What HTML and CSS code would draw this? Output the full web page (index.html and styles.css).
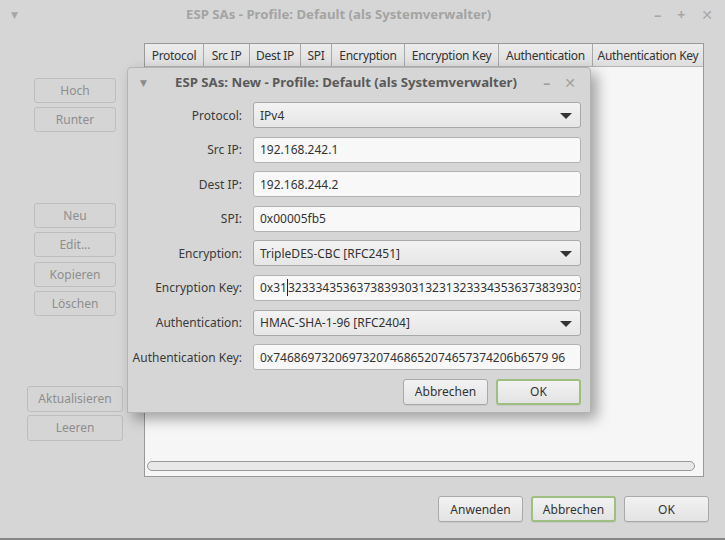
FILE: index.html
```html
<!DOCTYPE html>
<html lang="de">
<head>
    <meta charset="UTF-8">
    <title>ESP SAs</title>
    <link rel="stylesheet" href="styles.css">
</head>
<body>
    <div class="window">
        <div class="titlebar">
            <span class="tb-menu">&#9660;</span>
            <span class="tb-title">ESP SAs - Profile: Default (als Systemverwalter)</span>
            <span class="tb-ctrl"><span>&#8211;</span><span>+</span><span>&#10005;</span></span>
        </div>

        <div class="main">
            <div class="side">
                <div class="group g-move">
                    <button class="btn off">Hoch</button>
                    <button class="btn off">Runter</button>
                </div>
                <div class="group g-edit">
                    <button class="btn off">Neu</button>
                    <button class="btn off">Edit...</button>
                    <button class="btn off">Kopieren</button>
                    <button class="btn off">Löschen</button>
                </div>
                <div class="group g-list">
                    <button class="btn off wide">Aktualisieren</button>
                    <button class="btn off wide">Leeren</button>
                </div>
            </div>

            <div class="table">
                <div class="thead">
                    <div class="th" style="width:59px">Protocol</div>
                    <div class="th" style="width:46px">Src IP</div>
                    <div class="th" style="width:51px">Dest IP</div>
                    <div class="th" style="width:31px">SPI</div>
                    <div class="th" style="width:73px">Encryption</div>
                    <div class="th" style="width:94px">Encryption Key</div>
                    <div class="th" style="width:94px">Authentication</div>
                    <div class="th last">Authentication Key</div>
                </div>
                <div class="tbody"></div>
                <div class="hscroll"><div class="hbar"></div></div>
            </div>
        </div>

        <div class="footer">
            <button class="btn">Anwenden</button>
            <button class="btn default">Abbrechen</button>
            <button class="btn">OK</button>
        </div>

        <div class="dialog">
            <div class="dlg-title">
                <span class="tb-menu dark">&#9660;</span>
                <span class="dlg-text">ESP SAs: New - Profile: Default (als Systemverwalter)</span>
                <span class="dlg-ctrl"><span>&#8211;</span><span>&#10005;</span></span>
            </div>
            <div class="form">
                <label>Protocol:</label>
                <div class="select">IPv4</div>
                <label>Src IP:</label>
                <div class="entry">192.168.242.1</div>
                <label>Dest IP:</label>
                <div class="entry">192.168.244.2</div>
                <label>SPI:</label>
                <div class="entry">0x00005fb5</div>
                <label>Encryption:</label>
                <div class="select">TripleDES-CBC [RFC2451]</div>
                <label>Encryption Key:</label>
                <div class="entry"><span>0x31</span><span class="caret"></span><span>3233343536373839303132313233343536373839303</span></div>
                <label>Authentication:</label>
                <div class="select">HMAC-SHA-1-96 [RFC2404]</div>
                <label>Authentication Key:</label>
                <div class="entry">0x74686973206973207468652074657374206b6579 96</div>
                <div class="dlg-buttons">
                    <button class="btn">Abbrechen</button>
                    <button class="btn default">OK</button>
                </div>
            </div>
        </div>
    </div>
</body>
</html>
```

FILE: styles.css
```css
body {
    margin: 0;
    background: #d6d6d6;
    font-family: 'Noto Sans', 'DejaVu Sans', sans-serif;
    font-size: 12px;
    color: #3c3c3c;
}
.window {
    position: relative;
    width: 725px;
    height: 540px;
    background: #d6d6d6;
    border-bottom: 2px solid #888;
    box-sizing: border-box;
    overflow: hidden;
}
.titlebar {
    height: 28px;
    display: flex;
    align-items: center;
    padding: 0 12px 0 11px;
}
.tb-menu {
    font-size: 9px;
    color: #a6a6a6;
    width: 40px;
}
.tb-menu.dark {
    color: #8c8c8c;
}
.tb-title {
    flex: 1;
    text-align: center;
    font-weight: bold;
    font-size: 13.2px;
    color: #a4a4a4;
    white-space: nowrap;
    padding-right: 28px;
}
.tb-ctrl {
    display: flex;
    gap: 16px;
    color: #a8a8a8;
    font-size: 14px;
    font-weight: bold;
}

.main {
    display: flex;
    margin-top: 15px;
    height: 434px;
}
.side {
    width: 144px;
    flex: none;
}
.group {
    display: flex;
    flex-direction: column;
    gap: 4px;
    margin-left: 34px;
    width: 82px;
}
.g-move { margin-top: 35px; }
.g-edit { margin-top: 71px; gap: 4.3px; }
.g-list { margin-top: 70px; margin-left: 27px; width: 96px; gap: 3px; }

.btn {
    font-family: inherit;
    font-size: 12px;
    height: 26px;
    padding: 0 8px;
    border: 1px solid #a9a9a9;
    border-radius: 3px;
    background: linear-gradient(#f2f2f2, #e3e3e3);
    color: #333;
    box-shadow: 0 1px 0 rgba(0,0,0,0.06);
}
.btn.off {
    height: 25px;
    background: #d5d5d5;
    border-color: #bdbdbd;
    color: #8e8e8e;
    box-shadow: none;
}
.g-list .btn.off { height: 26px; }
.btn.default {
    border: 2px solid #9ebf7f;
}

.table {
    width: 560px;
    border: 1px solid #999;
    box-sizing: border-box;
    display: flex;
    flex-direction: column;
    background: #f6f6f6;
}
.thead {
    display: flex;
    height: 22px;
    border-bottom: 1px solid #b4b4b4;
    background: linear-gradient(#ececec, #dedede);
}
.th {
    border-right: 1px solid #a8a8a8;
    box-sizing: border-box;
    display: flex;
    align-items: center;
    justify-content: center;
    white-space: nowrap;
    letter-spacing: -0.3px;
    color: #333;
}
.th.last {
    flex: 1;
    border-right: none;
    overflow: hidden;
}
.tbody {
    flex: 1;
}
.hscroll {
    height: 14px;
    padding: 2px 8px 1px 2px;
}
.hbar {
    height: 10px;
    border: 1px solid #999;
    border-radius: 6px;
    background: #e8e8e8;
    box-sizing: border-box;
}

.footer {
    display: flex;
    justify-content: flex-end;
    gap: 8px;
    padding: 19px 16px 0 0;
}
.footer .btn { width: 85px; }

.dialog {
    position: absolute;
    left: 127px;
    top: 67px;
    width: 464px;
    height: 346px;
    background: #d6d6d6;
    border: 1px solid #b4b4b4;
    border-radius: 4px 4px 0 0;
    box-sizing: border-box;
    box-shadow: 6px 6px 14px rgba(0,0,0,0.35);
}
.dlg-title {
    height: 28px;
    display: flex;
    align-items: center;
    padding: 0 12px;
}
.dlg-title .tb-menu { width: 35px; }
.dlg-text {
    font-weight: bold;
    font-size: 13.2px;
    color: #5a5a5a;
    white-space: nowrap;
    flex: 1;
}
.dlg-ctrl {
    display: flex;
    gap: 14px;
    color: #a0a0a0;
    font-size: 14px;
    font-weight: bold;
    margin-right: 2px;
}
.form {
    display: grid;
    grid-template-columns: 114px 328px;
    column-gap: 11px;
    grid-auto-rows: 26px;
    row-gap: 8.6px;
    margin-top: 6px;
}
.form label {
    text-align: right;
    align-self: center;
    white-space: nowrap;
    color: #3a3a3a;
}
.select, .entry {
    box-sizing: border-box;
    border: 1px solid #a9a9a9;
    border-radius: 3px;
    display: flex;
    align-items: center;
    padding: 0 6px;
    white-space: nowrap;
    overflow: hidden;
    color: #333;
}
.entry span {
    flex: none;
}
.select {
    position: relative;
    background: linear-gradient(#f3f3f3, #e6e6e6);
}
.select::after {
    content: "";
    position: absolute;
    right: 8px;
    top: 10px;
    border-left: 6px solid transparent;
    border-right: 6px solid transparent;
    border-top: 6px solid #333;
}
.entry {
    background: #f8f8f8;
    border-color: #b2b2b2;
}
.entry .caret {
    display: inline-block;
    width: 1px;
    height: 17px;
    background: #222;
}
.dlg-buttons {
    grid-column: 2;
    display: flex;
    justify-content: flex-end;
    gap: 8px;
}
.dlg-buttons .btn { width: 85px; }
```
